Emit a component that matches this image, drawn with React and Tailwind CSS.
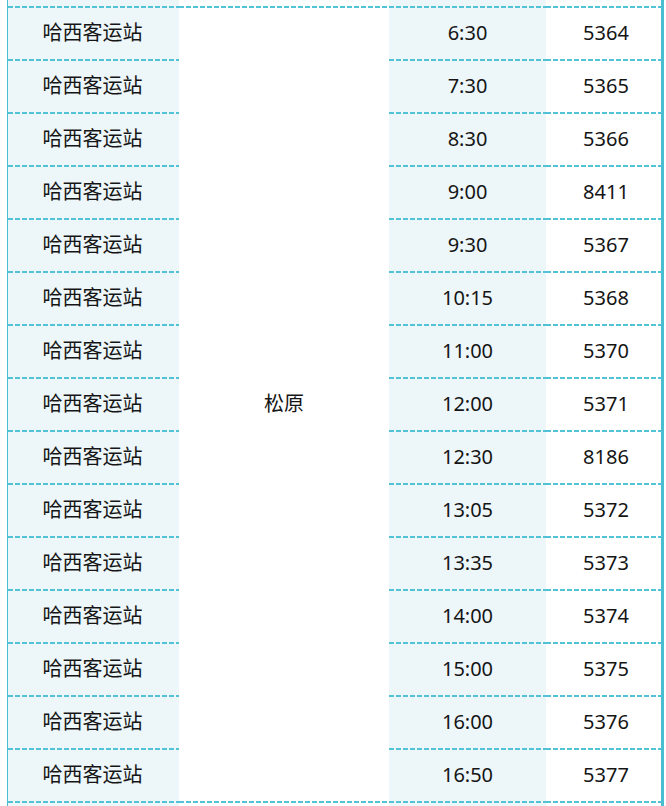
import React from "react";

const times = [
  ["6:30", "5364"],
  ["7:30", "5365"],
  ["8:30", "5366"],
  ["9:00", "8411"],
  ["9:30", "5367"],
  ["10:15", "5368"],
  ["11:00", "5370"],
  ["12:00", "5371"],
  ["12:30", "8186"],
  ["13:05", "5372"],
  ["13:35", "5373"],
  ["14:00", "5374"],
  ["15:00", "5375"],
  ["16:00", "5376"],
  ["16:50", "5377"],
];

// dashed divider drawn with a gradient so the dash rhythm matches
const Dash = () => (
  <div className="h-[2px] w-full shrink-0 bg-[repeating-linear-gradient(90deg,#52c3d6_0_5px,transparent_5px_7px)]" />
);

const Cell = ({ children, light, col }) => (
  <div className={`flex flex-col ${col} ${light ? "bg-[#edf7fa]" : "bg-white"}`}>
    <Dash />
    <div className="flex flex-1 items-center justify-center pb-[2px]">{children}</div>
  </div>
);

const App = () => {
  return (
    <div
      className="h-[806px] w-[666px] overflow-hidden bg-white text-[20px] text-[#151515]"
      style={{ fontFamily: '"Noto Sans", "Noto Sans CJK SC", sans-serif' }}
    >
      <div className="ml-[7px] grid w-[657px] grid-cols-[171px_210px_157px_115px] grid-rows-[6px_repeat(15,53px)_5px] border-l border-r-[3px] border-[#4bbdd0]">
        {/* tail of the row above */}
        <div className="col-start-1 row-start-1 bg-[#edf7fa]" />
        <div className="col-start-2 row-start-1 bg-white" />
        <div className="col-start-3 row-start-1 bg-[#edf7fa]" />
        <div className="col-start-4 row-start-1 bg-white" />

        <Cell col="col-start-2 row-start-2 row-span-15">松原</Cell>

        {times.map(([t, n]) => (
          <React.Fragment key={t}>
            <Cell light col="col-start-1">
              <span className="pr-[2px]">哈西客运站</span>
            </Cell>
            <Cell light col="col-start-3">{t}</Cell>
            <Cell col="col-start-4">
              <span className="pl-[5px]">{n}</span>
            </Cell>
          </React.Fragment>
        ))}

        {/* head of the row below */}
        <Cell light col="col-start-1" />
        <Cell col="col-start-2" />
        <Cell light col="col-start-3" />
        <Cell col="col-start-4" />
      </div>
    </div>
  );
};

export default App;
